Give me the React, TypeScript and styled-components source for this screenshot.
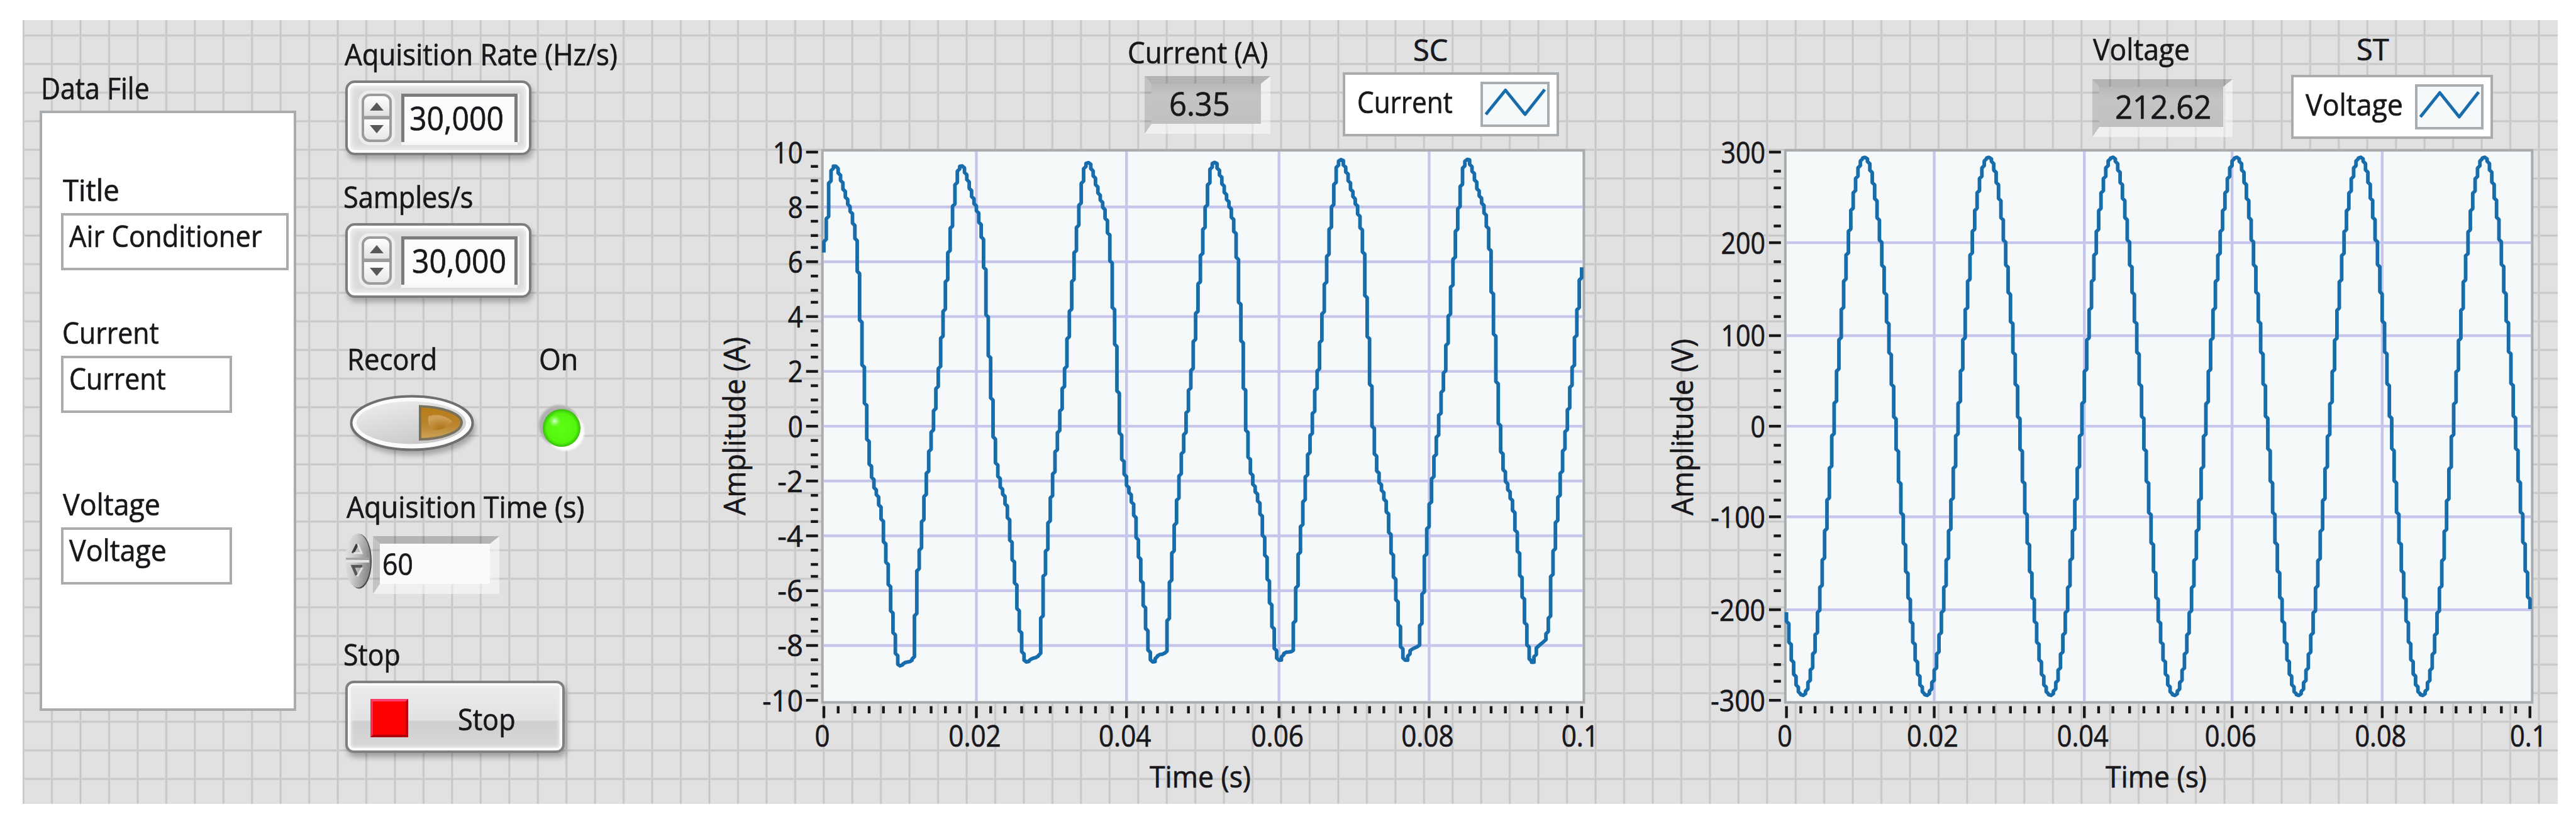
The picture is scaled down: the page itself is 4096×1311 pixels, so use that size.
import React, { useLayoutEffect, useRef, useState } from "react";
import styled, { createGlobalStyle } from "styled-components";

const FONT = '"Open Sans", "Noto Sans", sans-serif';
const INK = "#18181c";
const TRACE = "#176cac";
const EDGE = "#a9acaf";

const GlobalStyle = createGlobalStyle`
  * { box-sizing: border-box; }
  body { margin: 0; background: #ffffff; font-family: ${FONT}; color: ${INK}; }
`;

/* ---------- page ---------- */

const Page = styled.main`
  width: 4096px;
  height: 1311px;
  padding: 32px 29px 32px 36px;
  overflow: hidden;
`;

const Panel = styled.div`
  display: flex;
  align-items: flex-start;
  width: 4031px;
  height: 1247px;
  background-color: #e1e1e1;
  background-image: linear-gradient(
      90deg,
      #d4d4d4 0 1px,
      #c6c6c6 1px 3.4px,
      #d4d4d4 3.4px 4.4px,
      transparent 4.4px
    ),
    linear-gradient(#d4d4d4 0 1px, #c6c6c6 1px 3.4px, #d4d4d4 3.4px 4.4px, transparent 4.4px);
  background-size: 45.46px 45.46px, 45.46px 45.5px;
  background-position: -0.9px 22.4px;
`;

/* ---------- text ---------- */

const TextBox = styled.div<{ $w: number; $size: number; $mt: number; $ml: number }>`
  flex: none;
  width: ${(p) => p.$w}px;
  height: 48px;
  margin: ${(p) => p.$mt}px 0 0 ${(p) => p.$ml}px;
  font-size: ${(p) => p.$size}px;
  line-height: 48px;
  white-space: nowrap;
  -webkit-text-stroke: 0.7px ${INK};
`;

const Glyphs = styled.span`
  display: inline-block;
  transform-origin: 0 50%;
`;

interface TextProps {
  w: number;
  size?: number;
  mt?: number;
  ml?: number;
  children: string;
}

/* Narrows the face so that a caption takes exactly the given width. */
function Text({ w, size = 47, mt = 0, ml = 0, children }: TextProps) {
  const ref = useRef<HTMLSpanElement>(null);
  const [scale, setScale] = useState(0.89);
  useLayoutEffect(() => {
    if (ref.current) setScale(w / ref.current.offsetWidth);
  }, [w, children]);
  return (
    <TextBox $w={w} $size={size} $mt={mt} $ml={ml}>
      <Glyphs ref={ref} style={{ transform: `scaleX(${scale})` }}>
        {children}
      </Glyphs>
    </TextBox>
  );
}

/* ---------- data file column ---------- */

const DataFile = styled.section`
  flex: none;
  width: 408px;
  margin-left: 27px;
  padding-top: 84px;
`;

const Cluster = styled.div`
  height: 955px;
  margin-top: 12px;
  padding: 98px 0 0 30px;
  background: #ffffff;
  border: 4px solid ${EDGE};
`;

const StringField = styled.div<{ $w: number }>`
  width: ${(p) => p.$w}px;
  height: 91px;
  margin-top: 13px;
  padding: 8px 0 0 9px;
  background: #ffffff;
  border: 4px solid ${EDGE};
`;

/* ---------- controls column ---------- */

const Controls = styled.section`
  flex: none;
  width: 440px;
  margin-left: 76px;
  padding-top: 30px;
`;

const NumericFrame = styled.div`
  display: flex;
  width: 296px;
  height: 119px;
  margin: 18px 0 0 2px;
  padding: 17px 0 0 22px;
  background: #dadada;
  border: 4px solid #7d7d7d;
  border-radius: 15px;
  box-shadow: inset 0 0 0 4px #ffffff, inset 0 0 8px 7px #f2f2f2, 3px 7px 8px rgba(0, 0, 0, 0.26);
`;

const Stepper = styled.div`
  display: flex;
  flex-direction: column;
  flex: none;
  width: 48px;
  height: 77px;
  background: linear-gradient(#ffffff, #e2e2e2 44%, #9b9b9b 47%, #9b9b9b 53%, #ffffff 54%, #e6e6e6);
  border: 4px solid #9b9b9b;
  border-radius: 13px;
  box-shadow: 0 0 0 5px #ededed;
`;

const StepperHalf = styled.div`
  display: flex;
  flex: 1;
  align-items: center;
  justify-content: center;
`;

const NumericField = styled.div`
  flex: none;
  width: 185px;
  height: 77px;
  margin-left: 15px;
  padding: 9px 0 0 8px;
  background: #fbfbfb;
  border: solid #7b7b7b;
  border-width: 5px 5px 0 5px;
  box-shadow: 0 5px 0 #f6f6f6, 3px 0 0 #f0f0f0;
`;

const Row = styled.div<{ $mt: number; $ml?: number }>`
  display: flex;
  align-items: flex-start;
  margin: ${(p) => p.$mt}px 0 0 ${(p) => p.$ml ?? 0}px;
`;

const Drawing = styled.svg`
  display: block;
  flex: none;
  overflow: visible;
`;

const Sunken = styled.div<{ $w: number; $h: number; $ml: number; $mt: number; $fill: string }>`
  flex: none;
  width: ${(p) => p.$w}px;
  height: ${(p) => p.$h}px;
  margin: ${(p) => p.$mt}px 0 0 ${(p) => p.$ml}px;
  background: ${(p) => p.$fill} padding-box;
  border-style: solid;
  border-width: 12px 15px 16px 11px;
  border-color: rgba(0, 0, 0, 0.2) rgba(255, 255, 255, 0.5) rgba(255, 255, 255, 0.5)
    rgba(0, 0, 0, 0.13);
`;

const StopButton = styled.div`
  display: flex;
  align-items: flex-start;
  width: 349px;
  height: 115px;
  margin: 18px 0 0 2px;
  padding: 25px 0 0 36px;
  background: linear-gradient(#ececec, #e2e2e2 55%, #cfcfcf 57%, #d8d8d8);
  border: 4px solid #808080;
  border-radius: 13px;
  box-shadow: inset 0 0 0 4px #fafafa, inset 0 0 4px 6px #efefef, 3px 7px 8px rgba(0, 0, 0, 0.28);
`;

const StopMark = styled.div`
  flex: none;
  width: 60px;
  height: 61px;
  background: #ff0000;
  border: 4px solid;
  border-color: #ff3d6a #b80010 #b00008 #ff3048;
`;

/* ---------- chart columns ---------- */

const ChartSection = styled.section<{ $w: number; $ml: number }>`
  flex: none;
  width: ${(p) => p.$w}px;
  margin-left: ${(p) => p.$ml}px;
`;

const ChartHeader = styled.header`
  display: flex;
  align-items: flex-start;
  height: 196px;
`;

const HeaderGroup = styled.div<{ $w: number; $ml: number; $pt: number }>`
  flex: none;
  width: ${(p) => p.$w}px;
  margin-left: ${(p) => p.$ml}px;
  padding-top: ${(p) => p.$pt}px;
`;

const Legend = styled.div<{ $mt: number; $w: number; $pt: number }>`
  display: flex;
  align-items: flex-start;
  justify-content: space-between;
  width: ${(p) => p.$w}px;
  height: 102px;
  margin-top: ${(p) => p.$mt}px;
  padding: 11px ${(p) => p.$pt}px 0 19px;
  background: #ffffff;
  border: 4px solid ${EDGE};
`;

const Swatch = styled.div<{ $w: number }>`
  flex: none;
  width: ${(p) => p.$w}px;
  height: 72px;
  background: #f5f9fa;
  border: 4px solid ${EDGE};
`;

/* ---------- small drawings ---------- */

function Arrow({ down }: { down?: boolean }) {
  return (
    <Drawing width="22" height="14" viewBox="0 0 22 14">
      <path d={down ? "M0 1H22L11 14Z" : "M0 13H22L11 0Z"} fill="#585858" />
    </Drawing>
  );
}

function NumericControl({ value, inset }: { value: string; inset: number }) {
  return (
    <NumericFrame>
      <Stepper>
        <StepperHalf>
          <Arrow />
        </StepperHalf>
        <StepperHalf>
          <Arrow down />
        </StepperHalf>
      </Stepper>
      <NumericField>
        <Text w={150} size={52} ml={inset}>
          {value}
        </Text>
      </NumericField>
    </NumericFrame>
  );
}

function RecordButton() {
  return (
    <Drawing width="220" height="110" viewBox="0 0 220 110">
      <defs>
        <linearGradient id="face" x1="0" y1="0" x2="0.6" y2="1">
          <stop offset="0" stopColor="#efefef" />
          <stop offset="1" stopColor="#c9c9c9" />
        </linearGradient>
        <linearGradient id="amber" x1="0" y1="0" x2="0" y2="1">
          <stop offset="0" stopColor="#b87c14" />
          <stop offset="0.55" stopColor="#b8842c" />
          <stop offset="1" stopColor="#cfa45c" />
        </linearGradient>
        <radialGradient id="glow" cx="0.55" cy="0.95" r="0.8">
          <stop offset="0" stopColor="#a86c08" />
          <stop offset="1" stopColor="#d3a765" />
        </radialGradient>
        <filter id="soft" x="-20%" y="-20%" width="140%" height="150%">
          <feGaussianBlur stdDeviation="4" />
        </filter>
      </defs>
      <ellipse cx="112" cy="61" rx="97" ry="43" fill="#000" opacity="0.28" filter="url(#soft)" />
      <ellipse cx="108" cy="53" rx="96.5" ry="42.5" fill="#fbfbfb" stroke="#6f6f6f" strokeWidth="4" />
      <ellipse cx="107" cy="52.5" rx="87" ry="34" fill="url(#face)" />
      <path
        d="M121 26.5C155 27 187 38 187 52C187 68 155 78.500 121 79Z"
        fill="url(#amber)"
        stroke="#77715f"
        strokeWidth="4"
      />
      <path d="M134 42Q155 36 172 50Q160 66 140 64Q132 56 134 42Z" fill="url(#glow)" opacity="0.8" />
    </Drawing>
  );
}

function Led() {
  return (
    <Drawing width="90" height="90" viewBox="0 0 90 90">
      <defs>
        <radialGradient id="led" cx="0.5" cy="0.5" r="0.5">
          <stop offset="0" stopColor="#5cff12" />
          <stop offset="0.78" stopColor="#54f60e" />
          <stop offset="1" stopColor="#36bd08" />
        </radialGradient>
        <radialGradient id="spark">
          <stop offset="0" stopColor="#e2ffd8" />
          <stop offset="1" stopColor="#8aff60" stopOpacity="0" />
        </radialGradient>
        <filter id="rim" x="-20%" y="-20%" width="140%" height="140%">
          <feGaussianBlur stdDeviation="1.600" />
        </filter>
      </defs>
      <circle cx="41" cy="38" r="32.500" fill="#b0b0b0" filter="url(#rim)" />
      <circle cx="51" cy="48" r="30" fill="#ffffff" filter="url(#rim)" />
      <circle cx="45" cy="42" r="30" fill="url(#led)" />
      <circle cx="34" cy="31" r="10" fill="url(#spark)" />
    </Drawing>
  );
}

function OvalStepper() {
  return (
    <Drawing width="46" height="92" viewBox="0 0 46 92">
      <defs>
        <linearGradient id="oval" x1="0" y1="0" x2="1" y2="0.25">
          <stop offset="0" stopColor="#e6e6e6" />
          <stop offset="0.45" stopColor="#cbcbcb" />
          <stop offset="1" stopColor="#8c8c8c" />
        </linearGradient>
      </defs>
      <ellipse cx="24" cy="46" rx="20" ry="43.500" fill="#4c4c4c" />
      <ellipse cx="22" cy="45" rx="20" ry="43" fill="url(#oval)" />
      <path d="M3 42H40" stroke="#a2a2a2" strokeWidth="3" />
      <path d="M3 46H40" stroke="#e4e4e4" strokeWidth="4" />
      <path d="M14 33L21 19" stroke="#3c3c3c" strokeWidth="4.500" />
      <path d="M22 19L28 33H15" stroke="#e6e6e6" strokeWidth="3" fill="none" />
      <path d="M29 54H14L20 68" stroke="#565656" strokeWidth="4.500" fill="none" />
      <path d="M21 70L29 56" stroke="#e2e2e2" strokeWidth="3" />
    </Drawing>
  );
}

function Zigzag({ w }: { w: number }) {
  const left = w * 0.045;
  const right = w * 0.962;
  const step = (right - left) / 3;
  return (
    <Drawing width={w} height="64" viewBox={`0 0 ${w} 64`}>
      <polyline
        points={`${left},48 ${left + step},9.500 ${left + 2 * step},48 ${right},8.500`}
        fill="none"
        stroke={TRACE}
        strokeWidth="5"
        strokeLinejoin="round"
      />
    </Drawing>
  );
}

/* ---------- wave forms ---------- */

type Point = [number, number];

/* Screen height of the current trace around one crest, by distance from the crest. */
const CURRENT_CYCLE: Point[] = [
  [0, 0], [8.1, 23], [15.2, 49], [24.7, 77.500], [29.5, 101.5], [33.3, 128], [35.2, 158],
  [36.6, 185], [38.5, 219], [39.900, 254], [42.8, 289], [43.7, 329], [46.6, 364], [48, 399],
  [50.4, 431], [52.3, 453], [54.6, 477], [58, 496.5], [61.8, 514], [67, 529.5], [71.3, 549],
  [74.6, 571], [77, 597], [80.8, 627.5], [83.1, 653.5], [86.500, 680], [88.8, 710], [92.2, 741],
  [95, 767], [97.4, 786],
];

const CURRENT_RISE: Point[] = [
  [-76.3, 741], [-72, 688], [-70.5, 645], [-66.500, 610], [-64.6, 584], [-60.3, 540], [-58, 514],
  [-54.6, 483], [-51.800, 457], [-48.9, 435], [-46.1, 409], [-43.7, 388], [-41.3, 364],
  [-38, 338], [-35.6, 316], [-33.7, 289], [-30.9, 254], [-28, 224], [-26.1, 197], [-23.3, 167],
  [-21.4, 141], [-19, 115], [-15.7, 84], [-13.3, 62], [-10.5, 36], [-7.6, 14], [-3.8, 3],
];

const CRESTS = [261, 261, 256, 256, 252, 252, 252];
const TROUGHS: [number, number, number][] = [
  [1062, 1054, 1052], [1056, 1048, 1045], [1056, 1042, 1040],
  [1053, 1038, 1037], [1053, 1034, 1028], [1056, 1030, 1019],
];

function currentPoints(): Point[] {
  const out: Point[] = [];
  for (let n = 0; n < 7; n += 1) {
    const x = 1329 + n * 201.15;
    const lag = n === 0 || n === 6 ? 2.5 : 0;
    const top = CRESTS[n];
    const fit = (v: number) => top + (v * (1053 - top)) / 791;
    CURRENT_RISE.forEach(([dx, v]) => out.push([x + dx + (dx < -12 ? lag : 0), fit(v)]));
    CURRENT_CYCLE.forEach(([dx, v]) => out.push([x + dx, fit(v)]));
    if (n < 6) {
      const [low, a, b] = TROUGHS[n];
      out.push([x + 100, low - 4], [x + 102, low], [x + 104, low - 2], [x + 109, a]);
      out.push([x + 122, b], [x + 124, b - 10]);
    }
  }
  return out;
}

const CURRENT_POINTS = currentPoints();

function currentAt(x: number): number {
  const i = CURRENT_POINTS.findIndex((p) => p[0] > x);
  const [x0, y0] = CURRENT_POINTS[i - 1];
  const [x1, y1] = CURRENT_POINTS[i];
  return y0 + ((y1 - y0) * (x - x0)) / (x1 - x0);
}

const voltageAt = (x: number): number =>
  678.3 + 429 * Math.cos(((x - 2866.2) / 197.05) * 2 * Math.PI);

const DOT = 3.789;
const TOP = 242;
const BOTTOM = 1114.2;
const ROW = (BOTTOM - TOP) / 230;

/* The trace is plotted dot by dot: one vertical run for each dot column. */
function tracePath(at: (x: number) => number, x0: number, columns: number): string {
  const parts: string[] = [];
  for (let i = 0; i <= columns; i += 1) {
    const x = x0 + i * DOT;
    const a = at(x0 + Math.max(0, i - 0.5) * DOT);
    const b = at(x0 + Math.min(columns, i + 0.5) * DOT);
    const gap = Math.min(Math.abs(b - a) / 2, DOT / 2) * Math.sign(b - a);
    parts.push(`${x.toFixed(1)} ${(a + gap).toFixed(1)}L${x.toFixed(1)} ${(b - gap).toFixed(1)}`);
  }
  return `M${parts.join("L")}`;
}

interface ChartProps {
  left: number;
  width: number;
  frame: [number, number];
  origin: number;
  columns: number;
  yLabels: string[];
  yMinor: number;
  labelRight: number;
  digit: number;
  title: string;
  titleX: number;
  titleBottom: number;
  titleLength: number;
  timeX: number;
  trace: (x: number) => number;
}

const X_LABELS = ["0", "0.02", "0.04", "0.06", "0.08", "0.1"];

const Caption = styled.text`
  font-family: ${FONT};
  font-size: 47px;
  fill: ${INK};
  stroke: ${INK};
  stroke-width: 0.7px;
`;

function Chart(p: ChartProps) {
  const yStep = 230 / (p.yLabels.length - 1);
  const yTicks: { y: number; major: boolean }[] = [];
  for (let i = 0; i <= (p.yLabels.length - 1) * p.yMinor; i += 1) {
    yTicks.push({
      y: TOP + Math.round((i * yStep) / p.yMinor) * ROW,
      major: i % p.yMinor === 0,
    });
  }
  const xTicks: { x: number; major: boolean }[] = [];
  for (let i = 0; i <= 50; i += 1) {
    xTicks.push({ x: p.origin + Math.round((i * p.columns) / 50) * DOT, major: i % 10 === 0 });
  }
  const majorY = yTicks.filter((t) => t.major);
  const majorX = xTicks.filter((t) => t.major);
  const [fl, fr] = p.frame;
  const width = (s: string) =>
    s.split("").reduce((sum, c) => sum + (c === "." ? 11.4 : c === "-" ? 16.500 : p.digit), 0);
  return (
    <Drawing
      width={p.width}
      height="1047"
      viewBox={`${p.left} 228 ${p.width} 1047`}
      fill={INK}
    >
      <rect
        x={fl + 2}
        y="239.200"
        width={fr - fl - 4}
        height="878.300"
        fill="#f5f9fa"
        stroke={EDGE}
        strokeWidth="4"
      />
      {majorY.slice(1, -1).map((t) => (
        <path key={t.y} d={`M${fl + 4} ${t.y}H${fr - 4}`} stroke="#c6c6ed" strokeWidth="4.400" />
      ))}
      {majorX.slice(1, -1).map((t) => (
        <path key={t.x} d={`M${t.x} 241V1115.500`} stroke="#c6c6ed" strokeWidth="4.400" />
      ))}
      <path
        d={tracePath(p.trace, p.origin, p.columns)}
        fill="none"
        stroke={TRACE}
        strokeWidth="5.800"
        strokeLinejoin="round"
      />
      {yTicks.map((t) => (
        <rect
          key={t.y}
          x={t.major ? fl - 24 : fl - 16.500}
          y={t.y - 2.2}
          width={t.major ? 19 : 11.5}
          height="4.400"
        />
      ))}
      {xTicks.map((t) => (
        <rect key={t.x} x={t.x - 2.2} y="1123.500" width="4.400" height={t.major ? 19 : 11.5} />
      ))}
      {majorY.map((t, i) => (
        <Caption
          key={t.y}
          x={p.labelRight + 2 - width(p.yLabels[i])}
          y={t.y + 17.5}
          textLength={width(p.yLabels[i])}
          lengthAdjust="spacingAndGlyphs"
        >
          {p.yLabels[i]}
        </Caption>
      ))}
      {majorX.map((t, i) => (
        <Caption
          key={t.x}
          x={t.x - 2.5 - width(X_LABELS[i]) / 2}
          y="1188"
          textLength={width(X_LABELS[i])}
          lengthAdjust="spacingAndGlyphs"
        >
          {X_LABELS[i]}
        </Caption>
      ))}
      <Caption x={p.timeX} y="1253" textLength="161" lengthAdjust="spacingAndGlyphs">
        Time (s)
      </Caption>
      <Caption
        transform={`translate(${p.titleX} ${p.titleBottom}) rotate(-90)`}
        textLength={p.titleLength}
        lengthAdjust="spacingAndGlyphs"
      >
        {p.title}
      </Caption>
    </Drawing>
  );
}

/* ---------- app ---------- */

export default function App() {
  return (
    <>
      <GlobalStyle />
      <Page>
        <Panel>
          <DataFile>
            <Text w={173} ml={2}>Data File</Text>
            <Cluster>
              <Text w={90} ml={3}>Title</Text>
              <StringField $w={362}>
                <Text w={307}>Air Conditioner</Text>
              </StringField>
              <Text w={154} mt={75} ml={2}>Current</Text>
              <StringField $w={272}>
                <Text w={154}>Current</Text>
              </StringField>
              <Text w={155} mt={121} ml={3}>Voltage</Text>
              <StringField $w={272}>
                <Text w={155}>Voltage</Text>
              </StringField>
            </Cluster>
          </DataFile>

          <Controls>
            <Text w={434} ml={1}>Aquisition Rate (Hz/s)</Text>
            <NumericControl value="30,000" inset={0} />
            <Text w={206} ml={-1} mt={42}>Samples/s</Text>
            <NumericControl value="30,000" inset={4} />
            <Row $mt={73}>
              <Text w={143} ml={5}>Record</Text>
              <Text w={62} ml={162}>On</Text>
            </Row>
            <Row $mt={25}>
              <RecordButton />
              <Row $mt={19} $ml={81}>
                <Led />
              </Row>
            </Row>
            <Text w={378} ml={4} mt={52}>Aquisition Time (s)</Text>
            <Row $mt={17}>
              <OvalStepper />
              <Sunken $w={201} $h={92} $ml={0} $mt={6} $fill="#fafafa">
                <Text w={49} ml={4} mt={8}>60</Text>
              </Sunken>
            </Row>
            <Text w={91} ml={-1} mt={72}>Stop</Text>
            <StopButton>
              <StopMark />
              <Text w={92} ml={79} mt={8}>Stop</Text>
            </StopButton>
          </Controls>

          <ChartSection $w={1430} $ml={133}>
            <ChartHeader>
              <HeaderGroup $w={228} $ml={672} $pt={27}>
                <Text w={223} ml={1}>Current (A)</Text>
                <Sunken
                  $w={200}
                  $h={92}
                  $ml={28}
                  $mt={14}
                  $fill="linear-gradient(#b8b8b8, #c4c4c4 30%, #c0c0c0)"
                >
                  <Text w={97} size={52} ml={28} mt={7}>6.35</Text>
                </Sunken>
              </HeaderGroup>
              <HeaderGroup $w={344} $ml={115} $pt={23}>
                <Text w={55} ml={112}>SC</Text>
                <Legend $w={344} $mt={12} $pt={11}>
                  <Text w={152} mt={8}>Current</Text>
                  <Swatch $w={110}>
                    <Zigzag w={102} />
                  </Swatch>
                </Legend>
              </HeaderGroup>
            </ChartHeader>
            <Chart
              left={1120}
              width={1430}
              frame={[1305.7, 2520.4]}
              origin={1310}
              columns={318}
              yLabels={["10", "8", "6", "4", "2", "0", "-2", "-4", "-6", "-8", "-10"]}
              yMinor={4}
              labelRight={1274.8}
              digit={24}
              title="Amplitude (A)"
              titleX={1184.6}
              titleBottom={820}
              titleLength={284}
              timeX={1828}
              trace={currentAt}
            />
          </ChartSection>

          <ChartSection $w={1430} $ml={80}>
            <ChartHeader>
              <HeaderGroup $w={225} $ml={695} $pt={22}>
                <Text w={154} ml={3}>Voltage</Text>
                <Sunken
                  $w={223}
                  $h={92}
                  $ml={2}
                  $mt={24}
                  $fill="linear-gradient(#b8b8b8, #c4c4c4 30%, #c0c0c0)"
                >
                  <Text w={153} size={52} ml={25} mt={7}>212.62</Text>
                </Sunken>
              </HeaderGroup>
              <HeaderGroup $w={321} $ml={93} $pt={22}>
                <Text w={52} ml={104}>ST</Text>
                <Legend $w={321} $mt={17} $pt={11}>
                  <Text w={155} mt={8}>Voltage</Text>
                  <Swatch $w={109}>
                    <Zigzag w={101} />
                  </Swatch>
                </Legend>
              </HeaderGroup>
            </ChartHeader>
            <Chart
              left={2630}
              width={1430}
              frame={[2836.8, 4028.3]}
              origin={2840.6}
              columns={312}
              yLabels={["300", "200", "100", "0", "-100", "-200", "-300"]}
              yMinor={5}
              labelRight={2805}
              digit={23.500}
              title="Amplitude (V)"
              titleX={2691.9}
              titleBottom={820}
              titleLength={281}
              timeX={3348}
              trace={voltageAt}
            />
          </ChartSection>
        </Panel>
      </Page>
    </>
  );
}
